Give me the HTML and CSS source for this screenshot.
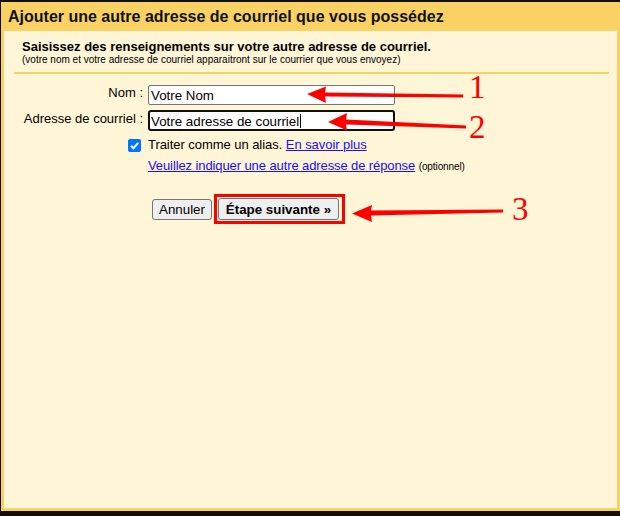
FILE: index.html
```html
<!DOCTYPE html>
<html lang="fr">
<head>
<meta charset="utf-8">
<title>Ajouter une autre adresse de courriel</title>
<link rel="stylesheet" href="styles.css">
</head>
<body>
<div class="panel">
  <div class="header">Ajouter une autre adresse de courriel que vous possédez</div>
  <div class="content">
    <div class="intro">
      <div class="intro-title">Saisissez des renseignements sur votre autre adresse de courriel.</div>
      <div class="intro-sub">(votre nom et votre adresse de courriel apparaitront sur le courrier que vous envoyez)</div>
    </div>
    <div class="form">
      <label class="label" for="nom">Nom :</label>
      <div class="field"><input id="nom" class="input" type="text" value="Votre Nom"></div>
      <label class="label label2" for="adr">Adresse de courriel :</label>
      <div class="field"><input id="adr" class="input focused" type="text" value="Votre adresse de courriel"><span class="caret"></span></div>
      <div class="cb-cell"><span class="checkbox"><svg viewBox="0 0 13 13" width="13" height="13"><rect x="0" y="0" width="13" height="13" rx="2" fill="#0075ff"/><path d="M3 6.8 L5.4 9.2 L10.2 3.8" fill="none" stroke="#fff" stroke-width="2"/></svg></span></div>
      <div class="alias">Traiter comme un alias. <a href="#" class="link">En savoir plus</a></div>
      <div></div>
      <div class="reply"><a href="#" class="link">Veuillez indiquer une autre adresse de réponse</a> <span class="opt">(optionnel)</span></div>
    </div>
    <div class="buttons">
      <button class="btn">Annuler</button>
      <span class="highlight"><button class="btn primary">Étape suivante »</button></span>
    </div>
  </div>
</div>
<svg class="annot" width="620" height="516" viewBox="0 0 620 516">
  <g fill="#ff0000" stroke="none">
    <path d="M307 94 L326 86.5 L325 92.5 L463 94.5 L463 97.5 L325 96.5 L326 103 Z"/>
    <path d="M328 122 L347 113 L346 119.5 L466 125.5 L466 128.5 L346 124.5 L347 130.5 Z"/>
    <path d="M352 213.5 L372 205 L371 210.5 L503 209.5 L503 212.5 L371 215.5 L372 222 Z"/>
  </g>
  <g fill="#ff0000" font-family="'Liberation Serif', serif" font-size="33">
    <text x="469" y="98">1</text>
    <text x="469" y="138">2</text>
    <text x="512" y="220">3</text>
  </g>
</svg>
</body>
</html>
```

FILE: styles.css
```css
html, body {
  margin: 0;
  padding: 0;
}
body {
  background: #0f0f0f;
  width: 620px;
  height: 516px;
  position: relative;
  overflow: hidden;
  font-family: "Liberation Sans", Arial, sans-serif;
  color: #000;
}
.panel {
  margin: 2px 0 0 1px;
  width: 619px;
  height: 509px;
  box-sizing: border-box;
  background: #fad163;
  padding: 0 3px 3px 3px;
  display: flex;
  flex-direction: column;
}
.header {
  height: 29px;
  line-height: 30px;
  padding-left: 4px;
  font-size: 16px;
  font-weight: bold;
  color: #111;
  white-space: nowrap;
}
.content {
  flex: 1;
  background: #fff5d7;
  padding-top: 8px;
}
.intro {
  margin: 0 8px 0 10px;
  padding: 0 0 6px 8px;
  border-bottom: 2px solid #fad163;
}
.intro-title {
  font-size: 13px;
  font-weight: bold;
  line-height: 15px;
}
.intro-sub {
  font-size: 10px;
  line-height: 12px;
}
.form {
  display: grid;
  grid-template-columns: 139px 1fr;
  column-gap: 5px;
  margin-top: 11px;
  font-size: 13px;
}
.label {
  text-align: right;
  line-height: 16px;
}
.label2 {
  padding-top: 1px;
}
.field {
  position: relative;
  margin-bottom: 5px;
}
.input {
  display: block;
  width: 247px;
  height: 20px;
  box-sizing: border-box;
  border: 1px solid #767676;
  border-radius: 2px;
  background: #fff;
  padding: 1px 2px 0 2px;
  font-family: "Liberation Sans", Arial, sans-serif;
  font-size: 13.33px;
  color: #000;
  margin: 0;
}
.input.focused {
  height: 21px;
  border: 2px solid #101010;
  border-radius: 3px;
  padding-left: 1px;
}
.caret {
  position: absolute;
  left: 152px;
  top: 4px;
  width: 1px;
  height: 14px;
  background: #000;
}
.cb-cell {
  display: flex;
  justify-content: flex-end;
  padding-top: 3px;
  padding-right: 2px;
}
.checkbox svg {
  display: block;
}
.alias {
  line-height: 16px;
  padding-top: 1px;
  letter-spacing: -0.05px;
}
.link {
  color: #1a0dff;
  text-decoration: underline;
}
.reply {
  margin-top: 5px;
  line-height: 16px;
  letter-spacing: -0.1px;
}
.opt {
  font-size: 10px;
}
.buttons {
  display: flex;
  align-items: center;
  gap: 2px;
  margin: 19px 0 0 148px;
}
.btn {
  font-family: "Liberation Sans", Arial, sans-serif;
  font-size: 13.33px;
  height: 21px;
  padding: 0 6px;
  background: #efefef;
  border: 1px solid #767676;
  border-radius: 3px;
  color: #000;
  margin: 0;
}
.btn.primary {
  font-weight: bold;
  height: 22px;
  width: 121px;
}
.highlight {
  display: inline-block;
  border: 3px solid #ff0000;
  padding: 1px 3px 1px 1px;
  line-height: 0;
}
.annot {
  position: absolute;
  left: 0;
  top: 0;
  pointer-events: none;
}
```
